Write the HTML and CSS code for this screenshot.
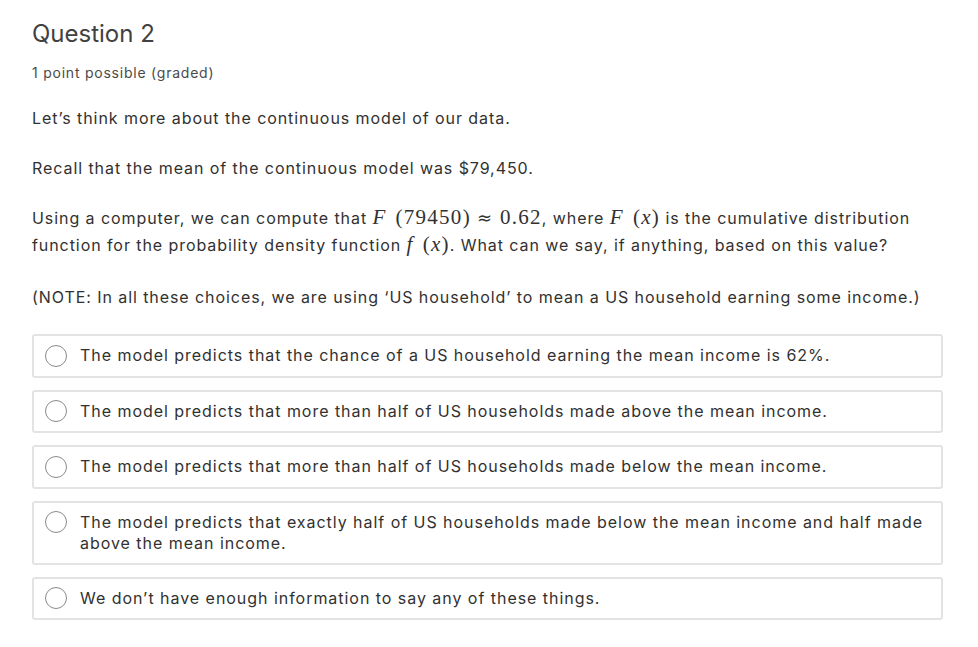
FILE: index.html
```html
<!DOCTYPE html>
<html lang="en">
<head>
<meta charset="utf-8">
<title>Question 2</title>
<link rel="stylesheet" href="styles.css">
</head>
<body>
<div class="problem">
  <h2 class="title">Question 2</h2>
  <div class="points">1 point possible (graded)</div>
  <p class="para">Let’s think more about the continuous model of our data.</p>
  <p class="para">Recall that the mean of the continuous model was $79,450.</p>
  <p class="para para-math">Using a computer, we can compute that <span class="math"><i>F</i><span class="sp"></span>(79450)<span class="rel">≈</span>0.62</span>, where <span class="math"><i>F</i><span class="sp"></span>(<i>x</i>)</span> is the cumulative distribution function for the probability density function <span class="math"><i>f</i><span class="sp"></span>(<i>x</i>)</span>. What can we say, if anything, based on this value?</p>
  <p class="para para-note">(NOTE: In all these choices, we are using ‘US household’ to mean a US household earning some income.)</p>
  <div class="choices">
    <label class="choice"><span class="radio"></span><span class="text">The model predicts that the chance of a US household earning the mean income is 62%.</span></label>
    <label class="choice"><span class="radio"></span><span class="text">The model predicts that more than half of US households made above the mean income.</span></label>
    <label class="choice"><span class="radio"></span><span class="text">The model predicts that more than half of US households made below the mean income.</span></label>
    <label class="choice"><span class="radio"></span><span class="text">The model predicts that exactly half of US households made below the mean income and half made above the mean income.</span></label>
    <label class="choice"><span class="radio"></span><span class="text">We don’t have enough information to say any of these things.</span></label>
  </div>
</div>
</body>
</html>
```

FILE: styles.css
```css
html, body {
  margin: 0;
  padding: 0;
  background: #ffffff;
}
body {
  font-family: Inter, "Noto Sans", "Liberation Sans", sans-serif;
  color: #313131;
}
.problem {
  padding: 20px 35px 20px 32px;
}
.title {
  margin: 0;
  font-size: 24px;
  line-height: 28px;
  font-weight: 400;
  color: #414141;
}
.points {
  margin-top: 15px;
  font-size: 14px;
  line-height: 20px;
  letter-spacing: 0.055em;
  color: #4a4a4a;
}
.para {
  margin: 0;
  margin-top: 24px;
  font-size: 16px;
  line-height: 26px;
  letter-spacing: 0.058em;
}
.points + .para {
  margin-top: 22px;
}
.para-math {
  line-height: 27px;
}
.para-note {
  margin-top: 25px;
}
.math {
  font-family: "Liberation Serif", "DejaVu Serif", serif;
  font-size: 21px;
  line-height: 1;
  letter-spacing: 0.06em;
  white-space: nowrap;
}
.math i {
  font-style: italic;
}
.sp {
  display: inline-block;
  width: 9px;
}
.rel {
  font-family: "DejaVu Sans", sans-serif;
  font-size: 18px;
  letter-spacing: 0;
  margin: 0 8px 0 6px;
}
.choices {
  margin-top: 24px;
  display: flex;
  flex-direction: column;
  gap: 12px;
}
.choice {
  display: flex;
  align-items: flex-start;
  gap: 13px;
  border: 2px solid #e3e3e3;
  border-radius: 3px;
  padding: 9px 12px 9px 11px;
  font-size: 16px;
  line-height: 21px;
  letter-spacing: 0.06em;
}
.radio {
  flex: none;
  width: 22px;
  height: 22px;
  margin-top: -0.5px;
  border: 1px solid #8a8a8a;
  border-radius: 50%;
  box-sizing: border-box;
  background: #fff;
}
```
